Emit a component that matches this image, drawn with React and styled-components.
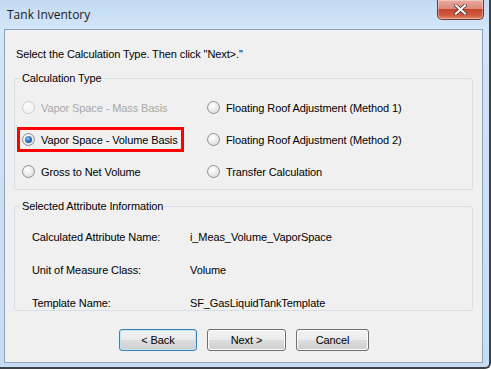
import React from "react";
import styled, { createGlobalStyle, css } from "styled-components";

const GlobalStyle = createGlobalStyle`
  html, body {
    margin: 0;
    padding: 0;
    background: #ffffff;
  }
  * {
    box-sizing: border-box;
  }
`;

const Window = styled.div`
  width: 491px;
  height: 369px;
  display: flex;
  flex-direction: column;
  background: linear-gradient(180deg, #c2daf3 0%, #d4e6f8 8%, #cfe2f6 30%, #c7ddf4 100%);
  border-right: 2px solid #3c4248;
  border-bottom: 2px solid #3c4248;
  border-bottom-right-radius: 6px;
  font-family: "Liberation Sans", Arial, sans-serif;
  font-size: 11px;
  letter-spacing: -0.1px;
  color: #000;
`;

const TitleBar = styled.div`
  height: 29px;
  display: flex;
  align-items: flex-start;
  padding-left: 7px;
  padding-right: 5px;
`;

const Title = styled.div`
  font-family: "Open Sans", "Liberation Sans", sans-serif;
  font-size: 12px;
  line-height: 12px;
  letter-spacing: 0;
  margin-top: 9px;
  color: #1b1b1b;
`;

const CloseButton = styled.div`
  margin-left: auto;
  width: 47px;
  height: 20px;
  border: 1px solid #6d3a33;
  border-top: none;
  border-radius: 0 0 5px 5px;
  background: linear-gradient(180deg, #e9a99c 0%, #de8b7b 45%, #c7452f 50%, #d05a40 80%, #e28a6c 100%);
  display: flex;
  align-items: center;
  justify-content: center;
  box-shadow: inset 0 0 0 1px rgba(255, 255, 255, 0.35);
`;

const Client = styled.div`
  margin-left: 4px;
  width: 479px;
  height: 334px;
  background: #f0f0f0;
  border: 1px solid #8fa3b8;
  display: flex;
  flex-direction: column;
`;

const Instruction = styled.div`
  margin: 18px 0 0 11px;
  line-height: 13px;
`;

const Group = styled.fieldset`
  margin: ${(p) => p.$top}px 9px 0 9px;
  padding: 0;
  height: ${(p) => p.$height}px;
  border: 1px solid #d5dfe5;
  border-radius: 3px;
  min-width: 0;
`;

const Legend = styled.legend`
  margin-left: 5px;
  padding: 0 2px;
  line-height: 13px;
`;

const OptionGrid = styled.div`
  display: grid;
  grid-template-columns: 185px 1fr;
  grid-auto-rows: 32px;
  padding: 14px 0 0 7px;
`;

const Option = styled.label`
  display: flex;
  align-items: center;
  gap: 6px;
  align-self: start;
  justify-self: start;
  height: 15px;
  margin-top: 1px;
  color: ${(p) => (p.$disabled ? "#a8a8a8" : "#000")};
  ${(p) =>
    p.$highlight &&
    css`
      outline: 3px solid #ff0000;
      outline-offset: 2px;
      padding-right: 1px;
    `}
`;

const Radio = styled.span`
  width: 13px;
  height: 13px;
  border-radius: 50%;
  border: 1px solid ${(p) => (p.$disabled ? "#cdcdcd" : "#8e8f8f")};
  background: ${(p) =>
    p.$disabled
      ? "radial-gradient(circle at 40% 35%, #fbfbfb 0%, #f1f1f1 100%)"
      : "radial-gradient(circle at 40% 35%, #ffffff 0%, #e6e6e6 60%, #d4d4d4 100%)"};
  display: flex;
  align-items: center;
  justify-content: center;
  flex-shrink: 0;
`;

const Dot = styled.span`
  width: 7px;
  height: 7px;
  border-radius: 50%;
  background: radial-gradient(circle at 40% 35%, #8fc3ef 0%, #2c6fb8 50%, #1b3f73 100%);
`;

const InfoGrid = styled.div`
  display: grid;
  grid-template-columns: 158px 1fr;
  grid-auto-rows: 33px;
  padding: 18px 0 0 17px;
`;

const InfoCell = styled.div`
  line-height: 13px;
`;

const ButtonRow = styled.div`
  display: flex;
  gap: 10px;
  margin: 18px 0 0 114px;
`;

const Button = styled.button`
  width: ${(p) => p.$w}px;
  height: 22px;
  font-family: "Liberation Sans", Arial, sans-serif;
  font-size: 11px;
  letter-spacing: -0.1px;
  color: #000;
  border: 1px solid ${(p) => (p.$focus ? "#3c7fb1" : "#707070")};
  border-radius: 3px;
  background: linear-gradient(180deg, #f2f2f2 0%, #ebebeb 49%, #dddddd 50%, #cfcfcf 100%);
  box-shadow: inset 0 0 0 1px ${(p) => (p.$focus ? "#bce4fa" : "#fcfcfc")};
  padding: 0;
`;

const options = [
  { label: "Vapor Space - Mass Basis", disabled: true },
  { label: "Floating Roof Adjustment (Method 1)" },
  { label: "Vapor Space - Volume Basis", checked: true, highlight: true },
  { label: "Floating Roof Adjustment (Method 2)" },
  { label: "Gross to Net Volume" },
  { label: "Transfer Calculation" },
];

const info = [
  ["Calculated Attribute Name:", "i_Meas_Volume_VaporSpace"],
  ["Unit of Measure Class:", "Volume"],
  ["Template Name:", "SF_GasLiquidTankTemplate"],
];

export default function App() {
  return (
    <>
      <GlobalStyle />
      <Window>
        <TitleBar>
          <Title>Tank Inventory</Title>
          <CloseButton>
            <svg width="13" height="11" viewBox="0 0 13 11">
              <path
                d="M2 1.5 L11 9.5 M11 1.5 L2 9.5"
                stroke="#4a2a26"
                strokeWidth="3.6"
                strokeLinecap="square"
              />
              <path
                d="M2 1.5 L11 9.5 M11 1.5 L2 9.5"
                stroke="#ffffff"
                strokeWidth="2.2"
                strokeLinecap="square"
              />
            </svg>
          </CloseButton>
        </TitleBar>
        <Client>
          <Instruction>Select the Calculation Type. Then click "Next&gt;."</Instruction>
          <Group $top={11} $height={118}>
            <Legend>Calculation Type</Legend>
            <OptionGrid>
              {options.map((o) => (
                <Option key={o.label} $disabled={o.disabled} $highlight={o.highlight}>
                  <Radio $disabled={o.disabled}>{o.checked && <Dot />}</Radio>
                  {o.label}
                </Option>
              ))}
            </OptionGrid>
          </Group>
          <Group $top={10} $height={111}>
            <Legend>Selected Attribute Information</Legend>
            <InfoGrid>
              {info.map(([k, v]) => (
                <React.Fragment key={k}>
                  <InfoCell>{k}</InfoCell>
                  <InfoCell>{v}</InfoCell>
                </React.Fragment>
              ))}
            </InfoGrid>
          </Group>
          <ButtonRow>
            <Button $w={78} $focus>&lt; Back</Button>
            <Button $w={79}>Next &gt;</Button>
            <Button $w={73}>Cancel</Button>
          </ButtonRow>
        </Client>
      </Window>
    </>
  );
}
